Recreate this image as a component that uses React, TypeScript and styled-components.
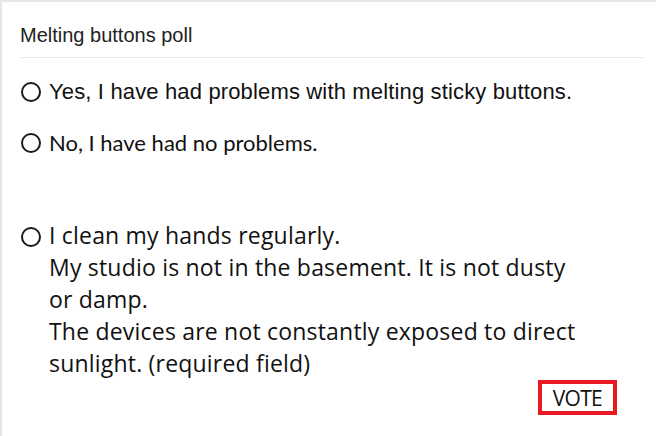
import React from 'react';
import styled, { createGlobalStyle } from 'styled-components';

const GlobalStyle = createGlobalStyle`
  html, body {
    margin: 0;
    background: #fff;
  }
`;

const Panel = styled.div`
  min-height: 434px;
  border-top: 2px solid #e6e6e6;
  border-left: 2px solid #e6e6e6;
  padding: 0 12px 0 18px;
  color: #111;
`;

const Header = styled.div`
  padding: 23px 0 12px;
  border-bottom: 1px solid #e6e6e6;
  font-family: 'Liberation Sans', Arial, sans-serif;
  font-size: 20px;
  line-height: 20px;
  color: #222;
`;

const Options = styled.form`
  display: flex;
  flex-direction: column;
  padding-top: 20px;
`;

const Option = styled.label<{ $font: string; $size: number; $line: number; $gap: number; $spacing?: number }>`
  display: flex;
  align-items: flex-start;
  gap: 8px;
  margin-bottom: ${(p) => p.$gap}px;
  font-family: ${(p) => p.$font};
  font-size: ${(p) => p.$size}px;
  line-height: ${(p) => p.$line}px;
  letter-spacing: ${(p) => p.$spacing ?? 0}px;
  color: #111;
  cursor: pointer;
`;

const Radio = styled.input.attrs({ type: 'radio', name: 'poll' })<{ $top: number }>`
  appearance: none;
  flex: none;
  width: 20px;
  height: 20px;
  margin: ${(p) => p.$top}px 0 0 1px;
  border: 2px solid #1a1a1a;
  border-radius: 50%;
  box-sizing: border-box;
  background: #fff;
`;

const Footer = styled.div`
  display: flex;
  justify-content: flex-end;
  padding-right: 27px;
  margin-top: 1px;
`;

const VoteButton = styled.button`
  box-sizing: border-box;
  border: 4px solid #e81b23;
  background: #fff;
  padding: 0 11px;
  height: 35px;
  font-family: 'Open Sans', 'Liberation Sans', sans-serif;
  font-size: 21px;
  letter-spacing: -0.7px;
  color: #111;
  cursor: pointer;
`;

const calibri = "'Open Sans', 'Lato', sans-serif";

export default function App() {
  return (
    <>
      <GlobalStyle />
      <Panel>
        <Header>Melting buttons poll</Header>
        <Options onSubmit={(e) => e.preventDefault()}>
          <Option $font="'Liberation Sans', Arial, sans-serif" $size={22} $line={28} $gap={23} $spacing={0.15}>
            <Radio $top={4} />
            <span>Yes, I have had problems with melting sticky buttons.</span>
          </Option>
          <Option $font="'Lato', sans-serif" $size={22} $line={28} $gap={62}>
            <Radio $top={4} />
            <span>No, I have had no problems.</span>
          </Option>
          <Option $font={calibri} $size={23} $line={32} $gap={0} $spacing={0.2}>
            <Radio $top={8} />
            <span>
              I clean my hands regularly.
              <br />
              My studio is not in the basement. It is not dusty
              <br />
              or damp.
              <br />
              The devices are not constantly exposed to direct
              <br />
              sunlight. (required field)
            </span>
          </Option>
          <Footer>
            <VoteButton type="submit">VOTE</VoteButton>
          </Footer>
        </Options>
      </Panel>
    </>
  );
}
